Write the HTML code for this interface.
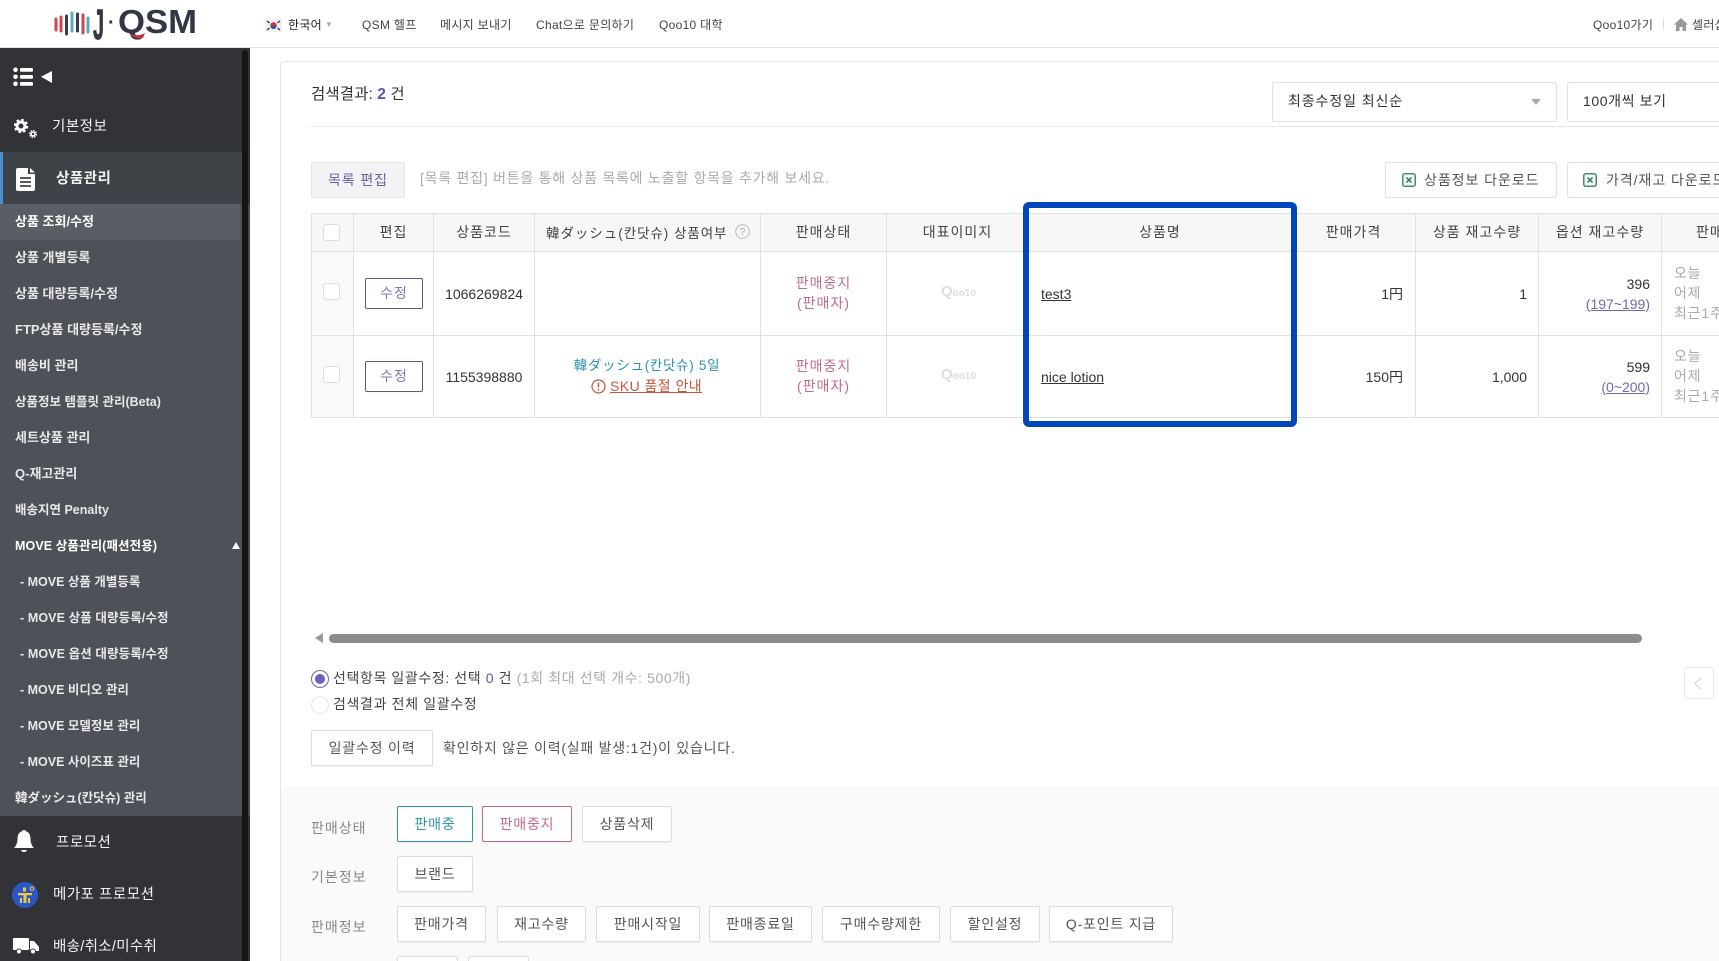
<!DOCTYPE html>
<html lang="ko">
<head>
<meta charset="utf-8">
<title>J-QSM</title>
<style>
html,body{margin:0;padding:0;width:1719px;height:961px;overflow:hidden;background:#fff}
body{position:relative;font-family:"Liberation Sans","Noto Sans CJK KR",sans-serif;font-size:14px;color:#333}
.a{position:absolute;white-space:nowrap}
.t{position:absolute;white-space:nowrap;line-height:20px;height:20px}
.m{position:absolute;left:15px;white-space:nowrap;font-size:13px;line-height:20px;color:#e8e8e8;font-weight:700;margin-top:1px}
.n{position:absolute;color:#444;font-size:12px;line-height:20px;top:15px;white-space:nowrap;letter-spacing:.3px}
.sec{position:absolute;white-space:nowrap;font-size:14.5px;line-height:20px;color:#f2f2f2;letter-spacing:.5px;margin-top:2px}
.b{position:absolute;box-sizing:border-box;height:36px;line-height:35px;text-align:center;background:#fff;border:1px solid #ddd;border-radius:2px;color:#555;font-size:14px;white-space:nowrap;box-shadow:0 1px 1px #eee;letter-spacing:.8px}
table{position:absolute;left:311px;top:213px;border-collapse:collapse;table-layout:fixed;width:1500px;font-size:14px}
th{height:36px;background:#f7f7f8;border:1px solid #e2e2e2;font-weight:400;color:#444;padding:0 0 1px;white-space:nowrap;letter-spacing:1px}
td{border:1px solid #e2e2e2;padding:0;text-align:center;color:#333;white-space:nowrap}
.cb{position:absolute;box-sizing:border-box;width:17px;height:17px;background:#fff;border:1px solid #ddd;border-radius:3px}
.ed{position:absolute;box-sizing:border-box;left:365px;width:58px;height:31px;line-height:28px;text-align:center;border:1px solid #5c5a8c;border-radius:2px;color:#8078bc;font-size:14px;background:#fff;letter-spacing:1px}
.q{position:absolute;left:941px;color:#dedede;font-size:10px;line-height:16px;font-weight:700;white-space:nowrap}
.q b{font-size:15px}
.st{position:absolute;left:761px;width:125px;text-align:center;color:#c56a8c;font-size:14px;line-height:20px;letter-spacing:1px}
.gr{position:absolute;left:1674px;color:#aaa;font-size:14px;line-height:20px;white-space:nowrap;letter-spacing:.8px}
</style>
</head>
<body>

<!-- header -->
<div class="a" style="left:0;top:47px;width:1719px;height:1px;background:#e3e3e3"></div>
<svg class="a" style="left:50px;top:4px" width="155" height="40" viewBox="0 0 155 40">
<g stroke-linecap="round" stroke-width="3" fill="none">
<path d="M6 15v11" stroke="#c9474f"/><path d="M11 13v14" stroke="#c9474f"/>
<path d="M16.500 12v18" stroke="#3a3d4a"/><path d="M22 9v18" stroke="#5aa9c8"/>
<path d="M27.500 10v17" stroke="#3a3d4a"/><path d="M33 11v18" stroke="#c9474f"/><path d="M38 14v14" stroke="#5aa9c8"/>
</g>
<text x="43" y="35" font-family="Liberation Sans" font-weight="700" font-size="43" fill="#333645" stroke="#333645" stroke-width=".8" textLength="11" lengthAdjust="spacingAndGlyphs">J</text>
<text x="58" y="25" font-family="Liberation Sans" font-weight="700" font-size="20" fill="#333645">·</text>
<text x="68" y="29" font-family="Liberation Sans" font-weight="700" font-size="33" fill="#333645" textLength="79" lengthAdjust="spacingAndGlyphs">QSM</text>
<path d="M78 28 q8 6 17 1 l-2 5 q-9 2 -15 -6z" fill="#c7313c"/>
</svg>

<svg class="a" style="left:265px;top:19px" width="17" height="13" viewBox="0 0 17 13"><rect width="17" height="13" fill="#f1f1f1"/><circle cx="8.500" cy="6.500" r="3.200" fill="#c8394a"/><path d="M5.500 7a3 3 0 0 0 6 0z" fill="#2c4f9e"/><path d="M2 2l2.500 2M2 11l2.500-2M15 2l-2.500 2M15 11l-2.500-2" stroke="#333" stroke-width="1.300"/></svg>
<div class="n" style="left:288px;color:#222;">한국어</div>
<div class="a" style="left:325px;top:19px;color:#aaa;font-size:8px;line-height:12px">▼</div>
<div class="n" style="left:362px">QSM 헬프</div>
<div class="n" style="left:440px">메시지 보내기</div>
<div class="n" style="left:536px">Chat으로 문의하기</div>
<div class="n" style="left:659px">Qoo10 대학</div>
<div class="n" style="left:1593px">Qoo10가기</div>
<div class="a" style="left:1663px;top:19px;width:1px;height:10px;background:#ddd"></div>
<svg class="a" style="left:1674px;top:18px" width="14" height="13" viewBox="0 0 14 13"><path d="M7 0L0 6.500h2V13h3.500V9h3v4H12V6.500h2z" fill="#999"/></svg>
<div class="n" style="left:1692px">셀러샵</div>

<!-- sidebar -->
<div class="a" style="left:0;top:48px;width:250px;height:913px;background:#313337"></div>
<div class="a" style="left:0;top:152px;width:242px;height:52px;background:#3f4247"></div>
<div class="a" style="left:0;top:152px;width:3px;height:52px;background:#4a90d0"></div>
<div class="a" style="left:0;top:204px;width:242px;height:612px;background:#4e5157"></div>
<div class="a" style="left:0;top:204px;width:240px;height:36px;background:#5a5d63"></div>
<div class="a" style="left:242px;top:50px;width:6px;height:911px;background:#141517;border-radius:3px 3px 0 0"></div>
<div class="a" style="left:248px;top:204px;width:2px;height:612px;background:#45474b"></div>

<svg class="a" style="left:13px;top:67px" width="40" height="20" viewBox="0 0 40 20" fill="#fff">
<circle cx="2.500" cy="2.800" r="2.300"/><circle cx="2.500" cy="9.800" r="2.300"/><circle cx="2.500" cy="16.800" r="2.300"/>
<rect x="7" y="1" width="13" height="3.800" rx="1"/><rect x="7" y="8" width="13" height="3.800" rx="1"/><rect x="7" y="15" width="13" height="3.800" rx="1"/>
<path d="M28 9.800L39 4v12z"/></svg>
<div class="sec" style="left:52px;top:115px">기본정보</div>
<svg class="a" style="left:14px;top:119px" width="24" height="20" viewBox="0 0 24 20">
<circle cx="7" cy="7" r="4" fill="none" stroke="#fff" stroke-width="3"/><circle cx="7" cy="7" r="6.200" fill="none" stroke="#fff" stroke-width="2" stroke-dasharray="2.600 2.270"/>
<circle cx="19" cy="15" r="2" fill="none" stroke="#fff" stroke-width="1.600"/><circle cx="19" cy="15" r="3.500" fill="none" stroke="#fff" stroke-width="1.200" stroke-dasharray="1.500 1.250"/></svg>
<svg class="a" style="left:16px;top:168px" width="20" height="23" viewBox="0 0 20 23"><path d="M2 0h10v6h7v15a2 2 0 0 1-2 2H2a2 2 0 0 1-2-2V2a2 2 0 0 1 2-2z" fill="#fff"/><path d="M14 0l5 4.500h-5z" fill="#fff"/><path d="M4 10h11M4 14h11M4 18h11" stroke="#3f4247" stroke-width="1.700"/></svg>
<div class="sec" style="left:56px;top:167px;font-weight:700">상품관리</div>

<div class="m" style="top:211px;color:#fff">상품 조회/수정</div>
<div class="m" style="top:247px">상품 개별등록</div>
<div class="m" style="top:283px">상품 대량등록/수정</div>
<div class="m" style="top:319px">FTP상품 대량등록/수정</div>
<div class="m" style="top:355px">배송비 관리</div>
<div class="m" style="top:391px;font-size:12.500px">상품정보 템플릿 관리(Beta)</div>
<div class="m" style="top:427px">세트상품 관리</div>
<div class="m" style="top:463px">Q-재고관리</div>
<div class="m" style="top:499px;font-size:12.500px">배송지연 Penalty</div>
<div class="m" style="top:535px;color:#fff;font-size:12.500px;letter-spacing:.1px">MOVE 상품관리(패션전용)</div>
<div class="a" style="left:232px;top:542px;width:0;height:0;border-left:4px solid transparent;border-right:4px solid transparent;border-bottom:7px solid #fff"></div>
<div class="m" style="left:20px;top:571px;font-size:12.500px">- MOVE 상품 개별등록</div>
<div class="m" style="left:20px;top:607px;font-size:12.500px;letter-spacing:.1px">- MOVE 상품 대량등록/수정</div>
<div class="m" style="left:20px;top:643px;font-size:12.500px;letter-spacing:.1px">- MOVE 옵션 대량등록/수정</div>
<div class="m" style="left:20px;top:679px;font-size:12.500px">- MOVE 비디오 관리</div>
<div class="m" style="left:20px;top:715px;font-size:12.500px">- MOVE 모델정보 관리</div>
<div class="m" style="left:20px;top:751px;font-size:12.500px">- MOVE 사이즈표 관리</div>
<div class="m" style="top:787px;font-size:12.500px;font-family:'Liberation Sans','Noto Sans CJK JP',sans-serif">韓ダッシュ(칸닷슈) 관리</div>

<svg class="a" style="left:14px;top:830px" width="20" height="24" viewBox="0 0 20 24" fill="#fff"><circle cx="10" cy="2" r="2"/><path d="M10 1c5 0 6.500 4 6.500 8 0 4 1.500 7 3.500 9H0c2-2 3.500-5 3.500-9 0-4 1.500-8 6.500-8z"/><path d="M7 20h6a3 2 0 0 1-6 0z"/></svg>
<div class="sec" style="left:56px;top:831px">프로모션</div>
<svg class="a" style="left:12px;top:882px" width="26" height="26" viewBox="0 0 26 26"><circle cx="13" cy="13" r="13" fill="#2b56c8"/><path d="M6 11h14v2.200h-5.500V21h-3v-7.800H6zM11 5.500h3v4h-3zM8 16h2v5H8zM16 16h2v5h-2z" fill="#f0c93a"/><circle cx="20" cy="6.500" r="1.800" fill="none" stroke="#f0c93a" stroke-width="1"/></svg>
<div class="sec" style="left:53px;top:883px">메가포 프로모션</div>
<svg class="a" style="left:13px;top:938px" width="26" height="16" viewBox="0 0 26 16" fill="#fff"><rect width="16" height="12" y="0" rx="1"/><path d="M17 3h4l5 6v4H17z"/><circle cx="6" cy="13.500" r="2.500" stroke="#313337" stroke-width="1"/><circle cx="20" cy="13.500" r="2.500" stroke="#313337" stroke-width="1"/></svg>
<div class="sec" style="left:53px;top:935px;letter-spacing:.3px">배송/취소/미수취</div>

<!-- main card -->
<div class="a" style="left:280px;top:61px;width:1460px;height:930px;border:1px solid #e6e6e6;border-radius:4px 0 0 0;box-sizing:border-box"></div>
<div class="a" style="left:311px;top:126px;width:1408px;height:1px;background:#e6e6e6"></div>
<div class="a" style="left:281px;top:786px;width:1438px;height:175px;background:#fafafa"></div>

<div class="t" style="left:311px;top:85px;font-size:15.500px;color:#333;letter-spacing:.1px">검색결과: <b style="color:#5a52a8">2</b> 건</div>

<div class="a" style="box-sizing:border-box;left:1272px;top:82px;width:285px;height:40px;border:1px solid #e2e2e2;border-radius:2px;background:#fff"></div>
<div class="t" style="left:1288px;top:91px;font-size:14px;color:#333;letter-spacing:.9px">최종수정일 최신순</div>
<div class="a" style="left:1531px;top:99px;width:0;height:0;border-left:5px solid transparent;border-right:5px solid transparent;border-top:6px solid #aaa"></div>
<div class="a" style="box-sizing:border-box;left:1567px;top:82px;width:200px;height:40px;border:1px solid #e2e2e2;border-radius:2px;background:#fff"></div>
<div class="t" style="left:1583px;top:91px;font-size:14px;color:#333;letter-spacing:.6px">100개씩 보기</div>

<div class="a" style="box-sizing:border-box;left:311px;top:162px;width:94px;height:36px;background:#f3f3f5;border:1px solid #e6e6e6;border-radius:2px;text-align:center;line-height:35px;color:#6a60a8;font-size:14px;letter-spacing:.9px">목록 편집</div>
<div class="t" style="left:420px;top:168px;color:#aaa;font-size:14px;letter-spacing:.75px">[목록 편집] 버튼을 통해 상품 목록에 노출할 항목을 추가해 보세요.</div>

<div class="a" style="box-sizing:border-box;left:1385px;top:162px;width:172px;height:36px;border:1px solid #e2e2e2;border-radius:2px;background:#fff"></div>
<svg class="a" style="left:1402px;top:173px" width="14" height="14" viewBox="0 0 14 14"><rect x=".75" y=".75" width="12.500" height="12.500" rx="2" fill="#eef6f2" stroke="#2f7a5e" stroke-width="1.300"/><path d="M4.500 4.500l5 5M9.500 4.500l-5 5" stroke="#2f7a5e" stroke-width="1.500"/></svg>
<div class="t" style="left:1424px;top:170px;font-size:14px;color:#555;letter-spacing:.95px">상품정보 다운로드</div>
<div class="a" style="box-sizing:border-box;left:1567px;top:162px;width:200px;height:36px;border:1px solid #e2e2e2;border-radius:2px;background:#fff"></div>
<svg class="a" style="left:1583px;top:173px" width="14" height="14" viewBox="0 0 14 14"><rect x=".75" y=".75" width="12.500" height="12.500" rx="2" fill="#eef6f2" stroke="#2f7a5e" stroke-width="1.300"/><path d="M4.500 4.500l5 5M9.500 4.500l-5 5" stroke="#2f7a5e" stroke-width="1.500"/></svg>
<div class="t" style="left:1606px;top:170px;font-size:14px;color:#555;letter-spacing:.95px">가격/재고 다운로드</div>

<!-- table -->
<table>
<colgroup><col style="width:42px"><col style="width:80px"><col style="width:101px"><col style="width:226px"><col style="width:126px"><col style="width:142px"><col style="width:263px"><col style="width:124px"><col style="width:123px"><col style="width:123px"><col style="width:150px"></colgroup>
<tr>
<th></th><th>편집</th><th>상품코드</th>
<th style="text-align:left;padding-left:11px;font-family:'Liberation Sans','Noto Sans CJK JP',sans-serif;font-size:13.500px;letter-spacing:.95px">韓ダッシュ(칸닷슈) 상품여부</th>
<th>판매상태</th><th>대표이미지</th><th>상품명</th><th>판매가격</th><th>상품 재고수량</th><th>옵션 재고수량</th>
<th style="text-align:left;padding-left:34px">판매량</th>
</tr>
<tr style="height:84px">
<td style="background:#f9f9fa"></td><td></td><td>1066269824</td><td></td><td></td><td></td>
<td style="text-align:left;padding-left:12px"><span style="text-decoration:underline;color:#333">test3</span></td>
<td style="text-align:right;padding-right:12px">1円</td>
<td style="text-align:right;padding-right:11px">1</td>
<td style="text-align:right;padding-right:11px;line-height:20px">396<br><span style="color:#7068b0;text-decoration:underline">(197~199)</span></td>
<td></td>
</tr>
<tr style="height:82px">
<td style="background:#f9f9fa"></td><td></td><td>1155398880</td><td></td><td></td><td></td>
<td style="text-align:left;padding-left:12px"><span style="text-decoration:underline;color:#333">nice lotion</span></td>
<td style="text-align:right;padding-right:12px">150円</td>
<td style="text-align:right;padding-right:11px">1,000</td>
<td style="text-align:right;padding-right:11px;line-height:20px">599<br><span style="color:#7068b0;text-decoration:underline">(0~200)</span></td>
<td></td>
</tr>
</table>

<div class="cb" style="left:323px;top:224px"></div>
<div class="cb" style="left:323px;top:283px"></div>
<div class="cb" style="left:323px;top:366px"></div>
<div class="ed" style="top:278px">수정</div>
<div class="ed" style="top:361px">수정</div>

<svg class="a" style="left:735px;top:224px" width="15" height="15" viewBox="0 0 15 15"><circle cx="7.500" cy="7.500" r="6.800" fill="none" stroke="#bbb"/><text x="7.500" y="11" text-anchor="middle" font-size="10" fill="#aaa" font-family="Liberation Sans">?</text></svg>

<div class="a" style="left:534px;width:226px;top:356px;text-align:center;line-height:20px;font-size:13.500px;letter-spacing:.7px;color:#2a93b5;font-family:'Liberation Sans','Noto Sans CJK JP',sans-serif">韓ダッシュ(칸닷슈) 5일</div>
<svg class="a" style="left:591px;top:379px" width="15" height="15" viewBox="0 0 15 15"><circle cx="7.500" cy="7.500" r="6.500" fill="none" stroke="#c8553d" stroke-width="1.200"/><path d="M7.500 3.500v5M7.500 10v1.500" stroke="#c8553d" stroke-width="1.400"/></svg>
<div class="t" style="left:610px;top:376px;color:#c8553d;text-decoration:underline;font-size:14px;letter-spacing:.45px">SKU 품절 안내</div>

<div class="st" style="top:273px">판매중지<br>(판매자)</div>
<div class="st" style="top:356px">판매중지<br>(판매자)</div>

<div class="q" style="top:284px"><b>Q</b>oo10</div>
<div class="q" style="top:367px"><b>Q</b>oo10</div>

<div class="gr" style="top:263px">오늘</div><div class="gr" style="top:283px">어제</div><div class="gr" style="top:303px">최근1주</div>
<div class="gr" style="top:346px">오늘</div><div class="gr" style="top:366px">어제</div><div class="gr" style="top:386px">최근1주</div>

<!-- blue frame -->
<div class="a" style="box-sizing:border-box;left:1022.500px;top:202px;width:274.500px;height:225px;border:6.500px solid #0047bb;border-radius:6px"></div>

<!-- scrollbar -->
<div class="a" style="left:315px;top:633px;width:0;height:0;border-top:5.500px solid transparent;border-bottom:5.500px solid transparent;border-right:8px solid #999"></div>
<div class="a" style="left:329px;top:634px;width:1313px;height:9px;background:#8c8c8c;border-radius:5px"></div>

<!-- radios -->
<div class="a" style="box-sizing:border-box;left:311px;top:670px;width:18px;height:18px;border:1px solid #6a62c0;border-radius:50%;background:#fff"></div>
<div class="a" style="left:315px;top:674px;width:10px;height:10px;border-radius:50%;background:#6a62c0"></div>
<div class="t" style="left:333px;top:668px;color:#444;font-size:14px;letter-spacing:.6px">선택항목 일괄수정: 선택 <span style="color:#5a52a8">0</span> 건 <span style="color:#aaa">(1회 최대 선택 개수: 500개)</span></div>
<div class="a" style="box-sizing:border-box;left:311px;top:696px;width:18px;height:18px;border:1px solid #e6e6e6;border-radius:50%;background:#fff"></div>
<div class="t" style="left:333px;top:694px;color:#444;font-size:14px;letter-spacing:.65px">검색결과 전체 일괄수정</div>
<div class="b" style="left:311px;top:730px;width:122px;">일괄수정 이력</div>
<div class="t" style="left:443px;top:738px;color:#555;font-size:14px;letter-spacing:.75px">확인하지 않은 이력(실패 발생:1건)이 있습니다.</div>

<div class="a" style="box-sizing:border-box;left:1684px;top:667px;width:30px;height:32px;border:1px solid #e8e8e8;border-radius:3px"></div>
<div class="a" style="left:1696px;top:679px;width:8px;height:8px;border-left:1px solid #ccc;border-bottom:1px solid #ccc;transform:rotate(45deg)"></div>

<!-- bottom -->
<div class="t" style="left:311px;top:818px;color:#888;font-size:14px;letter-spacing:1px">판매상태</div>
<div class="b" style="left:397px;top:806px;width:76px;border-color:#2f93b0;color:#2f93b0">판매중</div>
<div class="b" style="left:482px;top:806px;width:90px;border-color:#c56a8c;color:#c56a8c">판매중지</div>
<div class="b" style="left:582px;top:806px;width:90px">상품삭제</div>
<div class="t" style="left:311px;top:867px;color:#888;font-size:14px;letter-spacing:1px">기본정보</div>
<div class="b" style="left:397px;top:856px;width:76px">브랜드</div>
<div class="t" style="left:311px;top:917px;color:#888;font-size:14px;letter-spacing:1px">판매정보</div>
<div class="b" style="left:397px;top:906px;width:89px">판매가격</div>
<div class="b" style="left:497px;top:906px;width:89px">재고수량</div>
<div class="b" style="left:596px;top:906px;width:104px">판매시작일</div>
<div class="b" style="left:709px;top:906px;width:103px">판매종료일</div>
<div class="b" style="left:822px;top:906px;width:118px">구매수량제한</div>
<div class="b" style="left:950px;top:906px;width:90px">할인설정</div>
<div class="b" style="left:1049px;top:906px;width:124px">Q-포인트 지급</div>
<div class="b" style="left:397px;top:956px;width:61px"></div>
<div class="b" style="left:468px;top:956px;width:61px"></div>

</body>
</html>
